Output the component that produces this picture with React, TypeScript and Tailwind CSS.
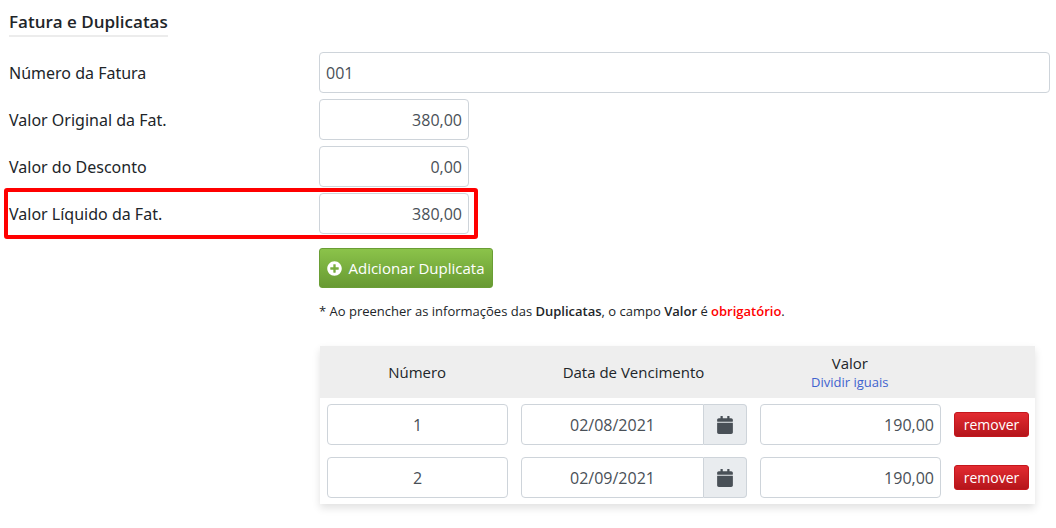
import { useState } from "react";
import type { ReactNode } from "react";

const field =
  "h-[41px] w-full min-w-0 rounded border border-[#ced4da] bg-white px-[6px] text-base text-[#495057] outline-none";

const cell = "py-[6px] pr-[6px] pl-[7px]";

function PlusCircle() {
  return (
    <svg viewBox="0 0 512 512" className="size-[15px] shrink-0 fill-current" aria-hidden="true">
      <path d="M256 8C119 8 8 119 8 256s111 248 248 248 248-111 248-248S393 8 256 8zm144 276c0 6.600-5.400 12-12 12h-92v92c0 6.600-5.400 12-12 12h-56c-6.600 0-12-5.400-12-12v-92h-92c-6.600 0-12-5.400-12-12v-56c0-6.600 5.400-12 12-12h92v-92c0-6.600 5.400-12 12-12h56c6.600 0 12 5.400 12 12v92h92c6.600 0 12 5.400 12 12v56z" />
    </svg>
  );
}

function Calendar() {
  return (
    <svg viewBox="0 0 448 512" className="h-[18px] w-4 fill-current" aria-hidden="true">
      <path d="M12 192h424c6.600 0 12 5.400 12 12v260c0 26.500-21.500 48-48 48H48c-26.500 0-48-21.500-48-48V204c0-6.600 5.400-12 12-12zm436-44v-36c0-26.500-21.500-48-48-48h-48V12c0-6.600-5.400-12-12-12h-40c-6.600 0-12 5.400-12 12v52H160V12c0-6.600-5.400-12-12-12h-40c-6.600 0-12 5.400-12 12v52H48C21.500 64 0 85.500 0 112v36c0 6.600 5.400 12 12 12h424c6.600 0 12-5.400 12-12z" />
    </svg>
  );
}

function Row({ id, label, children }: { id: string; label: string; children: ReactNode }) {
  return (
    <div className="relative flex items-center">
      <label htmlFor={id} className="w-[310px] shrink-0 font-['Noto_Sans',sans-serif]">
        {label}
      </label>
      {children}
    </div>
  );
}

const initial = [
  { id: 1, date: "02/08/2021", value: "190,00" },
  { id: 2, date: "02/09/2021", value: "190,00" },
];

export default function App() {
  const [rows, setRows] = useState(initial);
  const add = () =>
    setRows((r) => [...r, { id: Math.max(0, ...r.map((x) => x.id)) + 1, date: "", value: "0,00" }]);
  const divide = () =>
    setRows((r) => r.map((x) => ({ ...x, value: (380 / r.length).toFixed(2).replace(".", ",") })));

  return (
    <main className="bg-white pt-[9px] pr-[6px] pb-6 pl-[9px] font-['Open_Sans','Noto_Sans',sans-serif] text-base text-[#212529]">
      <h2 className="w-fit border-b-2 border-[#ececec] text-[17px] leading-[26px] font-semibold">
        Fatura e Duplicatas
      </h2>

      <div className="mt-[15px] flex flex-col gap-[6px]">
        <Row id="numero" label="Número da Fatura">
          <input id="numero" defaultValue="001" className={field} />
        </Row>
        <Row id="original" label="Valor Original da Fat.">
          <div className="w-[150px]">
            <input id="original" defaultValue="380,00" className={`${field} text-right`} />
          </div>
        </Row>
        <Row id="desconto" label="Valor do Desconto">
          <div className="w-[150px]">
            <input id="desconto" defaultValue="0,00" className={`${field} text-right`} />
          </div>
        </Row>
        <Row id="liquido" label="Valor Líquido da Fat.">
          <div className="w-[150px]">
            <input id="liquido" defaultValue="380,00" className={`${field} text-right`} />
          </div>
          <span
            aria-hidden="true"
            className="pointer-events-none absolute -top-[5px] -bottom-[5px] -left-[5px] w-[474px] rounded-[3px] border-4 border-[#ff0000]"
          />
        </Row>
      </div>

      <div className="mt-[14px] pl-[310px]">
        <button
          type="button"
          onClick={add}
          className="flex h-10 w-[174px] items-center justify-center gap-[6px] rounded-[3px] border border-[#6a9e35] bg-linear-to-b from-[#8bc34a] to-[#689a33] text-[15px] whitespace-nowrap text-white"
        >
          <PlusCircle />
          Adicionar Duplicata
        </button>

        <p className="mt-[13px] text-[13px] leading-5">
          * Ao preencher as informações das <strong className="font-semibold">Duplicatas</strong>, o campo{" "}
          <strong className="font-semibold">Valor</strong> é{" "}
          <strong className="font-semibold text-[#ff0000]">obrigatório</strong>.
        </p>

        <div className="mt-[25px] mr-[15px] ml-px shadow-[0_4px_8px_rgba(0,0,0,0.12)]">
          <table className="w-full table-fixed border-collapse text-center">
            <thead className="bg-[#eeeeee] text-[15px]">
              <tr className="h-[52px]">
                <th scope="col" className="font-normal">
                  Número
                </th>
                <th scope="col" className="w-1/3 font-normal">
                  Data de Vencimento
                </th>
                <th scope="col" className="px-[6px] leading-5 font-normal">
                  Valor
                  <button type="button" onClick={divide} className="mx-auto block text-[13px] leading-[18px] text-[#3f63cf]">
                    Dividir iguais
                  </button>
                </th>
                <th className="w-[88px]" aria-label="Ações" />
              </tr>
            </thead>
            <tbody>
              {rows.map((row) => (
                <tr key={row.id}>
                  <td className={cell}>
                    <input aria-label="Número" defaultValue={row.id} className={`${field} block text-center`} />
                  </td>
                  <td className={cell}>
                    <div className="flex">
                      <input
                        aria-label="Data de Vencimento"
                        defaultValue={row.date}
                        className={`${field} rounded-r-none text-center`}
                      />
                      <button
                        type="button"
                        aria-label="Abrir calendário"
                        className="flex w-[43px] shrink-0 items-center justify-center rounded-r border border-l-0 border-[#ced4da] bg-[#e9ecef] text-[#495057]"
                      >
                        <Calendar />
                      </button>
                    </div>
                  </td>
                  <td className={cell}>
                    <input
                      key={row.value}
                      aria-label="Valor"
                      defaultValue={row.value}
                      className={`${field} block text-right`}
                    />
                  </td>
                  <td className={cell}>
                    <button
                      type="button"
                      onClick={() => setRows((r) => r.filter((x) => x.id !== row.id))}
                      className="block h-[25px] w-full rounded-[3px] border border-[#c4161c] bg-linear-to-b from-[#e32b31] to-[#b5151b] text-sm leading-[22px] text-white"
                    >
                      remover
                    </button>
                  </td>
                </tr>
              ))}
            </tbody>
          </table>
        </div>
      </div>
    </main>
  );
}
